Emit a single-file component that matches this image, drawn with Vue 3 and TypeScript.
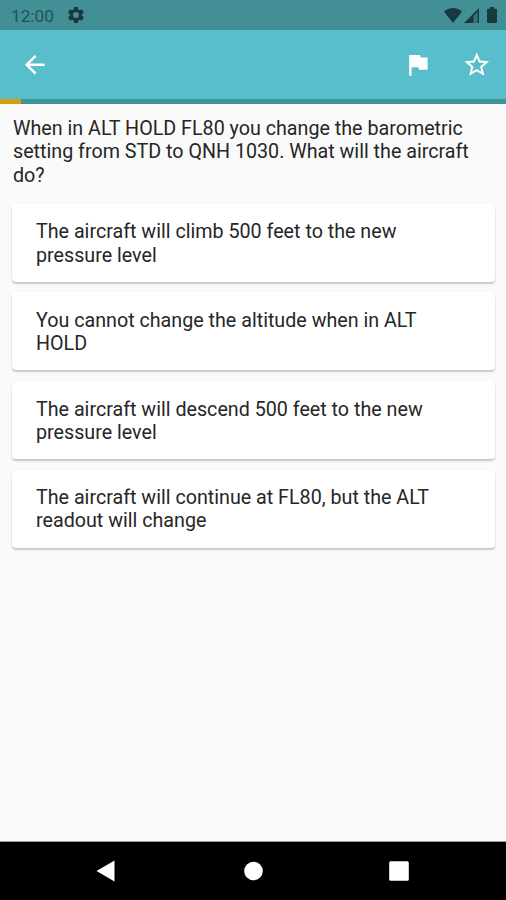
<script setup lang="ts">
interface Question {
  lines: string[]
  answers: string[][]
}

const progress: number = 4.15

const question: Question = {
  lines: [
    'When in ALT HOLD FL80 you change the barometric',
    'setting from STD to QNH 1030. What will the aircraft',
    'do?',
  ],
  answers: [
    ['The aircraft will climb 500 feet to the new', 'pressure level'],
    ['You cannot change the altitude when in ALT', 'HOLD'],
    ['The aircraft will descend 500 feet to the new', 'pressure level'],
    ['The aircraft will continue at FL80, but the ALT', 'readout will change'],
  ],
}
</script>

<template>
  <div class="screen">
    <header class="status">
      <span class="clock">12:00</span>
      <svg class="gear" viewBox="2 2 20 20">
        <path fill-rule="evenodd" d="M19.4 13a7.5 7.5 0 0 0 0-2l2.1-1.6c.2-.2.3-.4.1-.7l-2-3.4c-.1-.2-.4-.3-.6-.2l-2.5 1a7.3 7.3 0 0 0-1.7-1l-.4-2.6a.5.5 0 0 0-.5-.5h-4a.5.5 0 0 0-.5.5L9 5.1a7.3 7.3 0 0 0-1.7 1l-2.5-1c-.2-.1-.5 0-.6.2l-2 3.4c-.1.3-.1.5.1.7L4.5 11a7.5 7.5 0 0 0 0 2l-2.1 1.6c-.2.2-.3.4-.1.7l2 3.4c.1.2.4.3.6.2l2.5-1a7.3 7.3 0 0 0 1.7 1l.4 2.6c0 .3.2.5.5.5h4c.3 0 .5-.2.5-.5l.4-2.6a7.3 7.3 0 0 0 1.7-1l2.5 1c.2.1.5 0 .6-.2l2-3.4c.1-.3.1-.5-.1-.7zM12 15.7a3.7 3.7 0 1 1 0-7.4 3.7 3.7 0 0 1 0 7.4z" />
      </svg>
      <span class="spacer" />
      <svg class="wifi" viewBox="0 0 18 15"><path d="M0 3.700C5-1.200 13-1.200 18 3.700L9 15z" /></svg>
      <svg class="signal" viewBox="0 0 15 15">
        <path d="M0 15L15 0V15H13.500V4L9.500 8V15z" />
        <path opacity=".3" d="M9.500 8L13.500 4V15H9.500z" />
      </svg>
      <svg class="battery" viewBox="0 0 10 16"><path d="M3 0h4v1.700h2q1 0 1 1V15q0 1-1 1H1q-1 0-1-1V2.700q0-1 1-1h2z" /></svg>
    </header>
    <nav class="toolbar">
      <svg class="icon" viewBox="0 0 24 24"><path d="M20 11H7.830l5.590-5.590L12 4l-8 8 8 8 1.410-1.410L7.830 13H20v-2z" /></svg>
      <span class="spacer" />
      <svg class="icon flag" viewBox="0 0 24 24"><path d="M14.400 6L14 4H5v17h2v-7h5.600l.4 2h7V6z" /></svg>
      <svg class="icon" viewBox="0 0 24 24"><path d="M22 9.240l-7.190-.62L12 2 9.190 8.630 2 9.240l5.460 4.730L5.820 21 12 17.270 18.180 21l-1.630-7.030L22 9.240zM12 15.400l-3.760 2.270 1-4.280-3.320-2.880 4.380-.38L12 6.100l1.710 4.040 4.380.38-3.320 2.880 1 4.280L12 15.400z" /></svg>
    </nav>
    <div class="track"><div class="bar" :style="{ width: progress + '%' }" /></div>
    <main class="content">
      <p class="question">
        <span v-for="line in question.lines" :key="line" class="line">{{ line }}</span>
      </p>
      <div class="answers">
        <button v-for="(answer, i) in question.answers" :key="i" class="card" type="button">
          <span v-for="line in answer" :key="line" class="line">{{ line }}</span>
        </button>
      </div>
    </main>
    <footer class="navbar">
      <svg viewBox="0 0 20 22"><path d="M.5 11L18.500.5V21.500z" /></svg>
      <svg viewBox="0 0 20 22"><circle cx="10.500" cy="11" r="9.300" /></svg>
      <svg viewBox="0 0 20 22"><rect x=".2" y="1.200" width="19.600" height="19.600" rx="1.500" /></svg>
    </footer>
  </div>
</template>

<style>
body {
  margin: 0;
}
</style>

<style scoped>
.screen {
  display: flex;
  flex-direction: column;
  width: 506px;
  height: 900px;
  overflow: hidden;
  background: #fafafa;
  color: #262626;
  font-family: Roboto, "Liberation Sans", sans-serif;
}
.status {
  box-sizing: border-box;
  display: flex;
  align-items: center;
  height: 30px;
  padding: 0 9px 0 11px;
  background: #429095;
  fill: #173a3e;
}
.clock {
  width: 43px;
  padding-top: 1px;
  font-size: 17.2px;
  line-height: 20px;
  color: #1f5357;
}
.gear {
  width: 16px;
  height: 16px;
  margin-left: 14px;
}
.spacer {
  flex: 1;
}
.wifi {
  width: 18px;
  height: 15px;
}
.signal {
  width: 15px;
  height: 15px;
  margin-left: 2px;
}
.battery {
  width: 10px;
  height: 16px;
  margin-left: 8px;
}
.toolbar {
  box-sizing: border-box;
  display: flex;
  align-items: center;
  height: 69px;
  padding: 0 14.5px 0 20px;
  background: #58becb;
  fill: #fff;
}
.icon {
  width: 29.5px;
  height: 29.5px;
}
.flag {
  margin-right: 29.5px;
}
.track {
  height: 5px;
  background: #419498;
}
.bar {
  height: 100%;
  background: #d49f12;
}
.content {
  flex: 1;
  padding: 13px 11px 0 12px;
}
.question {
  margin: 0 0 17px 1px;
}
.line {
  display: block;
  white-space: nowrap;
  font-size: 19.7px;
  line-height: 23.3px;
}
.answers {
  display: flex;
  flex-direction: column;
  gap: 10.6px;
}
.card {
  box-sizing: border-box;
  height: 78px;
  padding: 1.5px 0 0 24px;
  border: 0;
  border-radius: 4px;
  background: #fff;
  box-shadow: 0 2px 2px rgba(0, 0, 0, 0.2), 0 0 2px rgba(0, 0, 0, 0.06);
  color: inherit;
  font: inherit;
  text-align: left;
}
.navbar {
  box-sizing: border-box;
  display: flex;
  align-items: center;
  justify-content: space-between;
  height: 59px;
  padding: 0 97px 0 96px;
  border-top: 1px solid #999;
  background: #000;
  fill: #fff;
}
.navbar svg {
  width: 20px;
  height: 22px;
}
</style>
